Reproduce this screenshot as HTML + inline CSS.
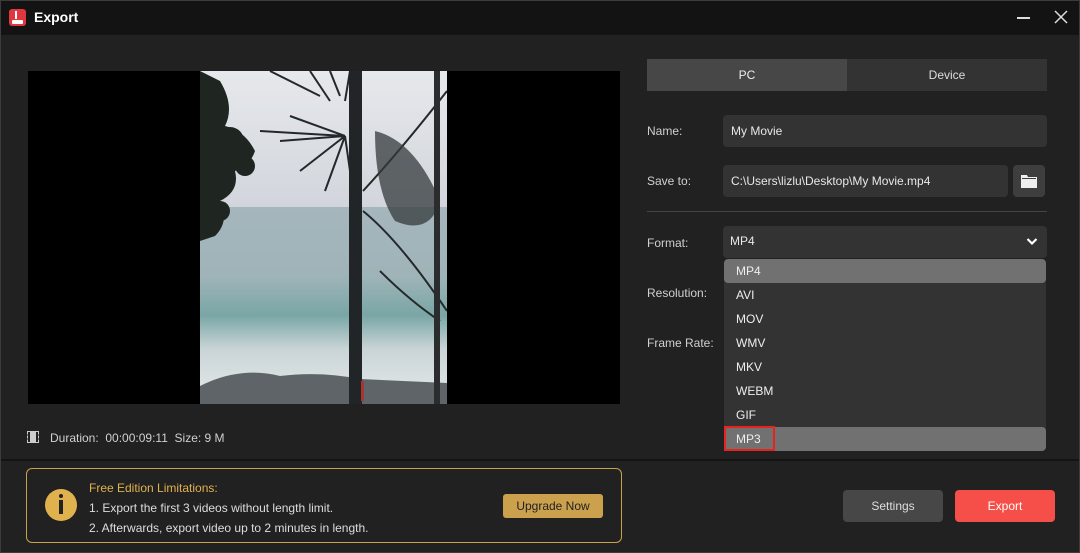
<!DOCTYPE html>
<html><head><meta charset="utf-8"><style>
*{margin:0;padding:0;box-sizing:border-box}
body{width:1080px;height:553px;background:#212121;font-family:"Liberation Sans",sans-serif;color:#ddd;position:relative;overflow:hidden;font-size:12px}
.a{position:absolute}
.frame{left:0;top:0;width:1080px;height:553px;border:1px solid #3c3c3c;pointer-events:none}
.title{left:0;top:0;width:1080px;height:35px;background:#131313}
.in{background:#333;border-radius:4px;color:#e8e8e8;padding-left:8px;line-height:32px}
.lbl{color:#d0d0d0;font-size:12px}
.dd div{height:24px;line-height:24px;padding-left:12px;color:#eee}
</style></head><body>
<div class="a title"></div>
<div class="a" style="left:9px;top:9px;width:17px;height:17px;border-radius:3px;background:#e0363e"></div>
<div class="a" style="left:12px;top:20px;width:11px;height:4px;background:#fff;border-radius:1px"></div>
<div class="a" style="left:15px;top:11px;width:2px;height:8px;background:#fff"></div>
<div class="a" style="left:34px;top:9px;font-size:14px;font-weight:bold;color:#fff">Export</div>
<div class="a" style="left:1017px;top:17px;width:13px;height:1.5px;background:#ddd"></div>
<svg class="a" style="left:1054px;top:10px" width="14" height="14"><path d="M1 1L13 13M13 1L1 13" stroke="#ddd" stroke-width="1.5"/></svg>

<div class="a" style="left:28px;top:71px;width:592px;height:333px;background:#000"></div>
<svg class="a" style="left:200px;top:71px" width="247" height="333" viewBox="0 0 247 333">
<defs><linearGradient id="sky" x1="0" y1="0" x2="0" y2="1"><stop offset="0" stop-color="#e6e8ec"/><stop offset="1" stop-color="#d2d6dc"/></linearGradient>
<linearGradient id="sea" x1="0" y1="0" x2="0" y2="1"><stop offset="0" stop-color="#a5b6bd"/><stop offset="0.35" stop-color="#9fb4b8"/><stop offset="0.55" stop-color="#7aa6a6"/><stop offset="0.72" stop-color="#c9d4d6"/><stop offset="1" stop-color="#e6eaec"/></linearGradient></defs>
<rect width="247" height="136" fill="url(#sky)"/>
<rect y="136" width="247" height="197" fill="url(#sea)"/>
<path d="M0 315 Q40 295 80 305 Q120 300 160 308 L247 312 L247 333 L0 333Z" fill="#5e6468"/>
<g fill="#1f2622">
<path d="M0 0 L20 10 Q35 35 25 55 Q45 60 55 80 Q50 95 35 100 Q40 120 20 130 Q30 150 15 165 L0 170Z"/>
<circle cx="30" cy="70" r="14"/><circle cx="45" cy="95" r="10"/><circle cx="20" cy="140" r="10"/>
</g>
<g stroke="#23282a" stroke-width="2" fill="none">
<path d="M145 65 L90 45 M145 65 L80 70 M145 65 L100 100 M145 65 L125 120 M145 65 L60 60 M145 65 L150 100"/>
<path d="M110 0 L130 30 M130 0 L140 25 M150 0 L145 30 M70 0 L120 25"/>
<path d="M163 140 Q200 170 247 240"/>
<path d="M163 120 Q200 80 247 20"/>
<path d="M180 200 Q210 230 240 250"/>
</g>
<path d="M175 60 Q215 70 240 130 Q230 165 195 150 Q175 120 175 60Z" fill="#343a3c" opacity=".75"/>
<rect x="149" y="0" width="13" height="333" fill="#222527"/>
<rect x="234" y="0" width="6" height="333" fill="#2a2c2d"/>
<rect x="161" y="310" width="3" height="20" fill="#a33"/>
</svg>
<svg class="a" style="left:27px;top:431px" width="12" height="12"><rect x="0.5" y="0.5" width="11" height="11" fill="none" stroke="#ccc"/><rect x="3" y="1" width="6" height="10" fill="#ccc"/><path d="M0 4h3M0 8h3M9 4h3M9 8h3" stroke="#222"/></svg>
<div class="a" style="left:50px;top:431px;color:#d0d0d0">Duration:&nbsp; 00:00:09:11&nbsp; Size:&nbsp;9 M</div>

<div class="a" style="left:647px;top:59px;width:200px;height:32px;background:#474747;text-align:center;line-height:32px;color:#eee">PC</div>
<div class="a" style="left:847px;top:59px;width:200px;height:32px;background:#333;text-align:center;line-height:32px;color:#ddd">Device</div>
<div class="a lbl" style="left:647px;top:124px">Name:</div>
<div class="a in" style="left:723px;top:115px;width:324px;height:32px">My Movie</div>
<div class="a lbl" style="left:647px;top:174px">Save to:</div>
<div class="a in" style="left:723px;top:165px;width:285px;height:32px">C:\Users\lizlu\Desktop\My Movie.mp4</div>
<div class="a" style="left:1013px;top:165px;width:32px;height:32px;background:#3e3e3e;border-radius:4px"></div>
<svg class="a" style="left:1021px;top:174px" width="16" height="14"><path d="M0 1h6l1 2h9v11H0z" fill="#eee"/><rect x="1" y="4" width="14" height="1" fill="#3e3e3e"/></svg>
<div class="a" style="left:647px;top:211px;width:400px;height:1px;background:#444"></div>
<div class="a lbl" style="left:647px;top:236px">Format:</div>
<div class="a in" style="left:723px;top:226px;width:324px;height:32px;line-height:31px;padding-left:7px">MP4</div>
<svg class="a" style="left:1026px;top:237px" width="12" height="9"><path d="M1.5 2L6 6.5L10.5 2" fill="none" stroke="#fff" stroke-width="2.2"/></svg>
<div class="a lbl" style="left:647px;top:286px">Resolution:</div>
<div class="a lbl" style="left:647px;top:336px">Frame Rate:</div>
<div class="a dd" style="left:724px;top:259px;width:322px;height:192px;background:#333;border-radius:4px;overflow:hidden">
<div style="background:#717171;border-radius:4px">MP4</div><div>AVI</div><div>MOV</div><div>WMV</div><div>MKV</div><div>WEBM</div><div>GIF</div><div style="background:#717171;border-radius:4px">MP3</div></div>
<div class="a" style="left:724px;top:426px;width:51px;height:25px;border:2px solid #e8231c"></div>

<div class="a" style="left:0;top:459px;width:1080px;height:2px;background:#141414"></div>
<div class="a" style="left:26px;top:468px;width:596px;height:75px;border:1px solid #c9a24c;border-radius:6px"></div>
<div class="a" style="left:45px;top:489px;width:32px;height:32px;border-radius:50%;background:#e0b24e"></div>
<div class="a" style="left:59px;top:494px;width:4px;height:4px;background:#222;border-radius:50%"></div>
<div class="a" style="left:59px;top:500px;width:4px;height:14px;background:#222"></div>
<div class="a" style="left:89px;top:481px;color:#e0b24e">Free Edition Limitations:</div>
<div class="a" style="left:89px;top:501px;color:#ddd">1. Export the first 3 videos without length limit.</div>
<div class="a" style="left:89px;top:521px;color:#ddd">2. Afterwards, export video up to 2 minutes in length.</div>
<div class="a" style="left:503px;top:494px;width:100px;height:24px;background:#cba14d;border-radius:3px;color:#222;text-align:center;line-height:24px">Upgrade Now</div>
<div class="a" style="left:843px;top:490px;width:100px;height:32px;background:#474747;border-radius:4px;text-align:center;line-height:32px;color:#ddd">Settings</div>
<div class="a" style="left:955px;top:490px;width:100px;height:32px;background:#f64f49;border-radius:4px;text-align:center;line-height:32px;color:#fff">Export</div>
<div class="a frame"></div>
</body></html>
